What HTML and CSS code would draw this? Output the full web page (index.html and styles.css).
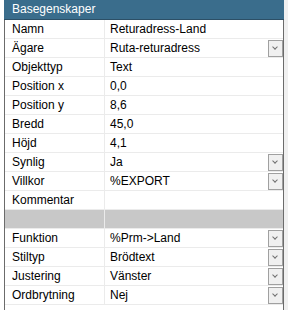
FILE: index.html
```html
<!DOCTYPE html>
<html lang="sv">
<head>
    <meta charset="UTF-8">
    <title>Basegenskaper</title>
    <link rel="stylesheet" href="styles.css">
</head>
<body>
<div class="panel">
    <div class="panel-header">Basegenskaper</div>
    <div class="grid">
        <div class="row"><div class="key">Namn</div><div class="val">Returadress-Land</div></div>
        <div class="row"><div class="key">Ägare</div><div class="val">Ruta-returadress<span class="drop"></span></div></div>
        <div class="row"><div class="key">Objekttyp</div><div class="val">Text</div></div>
        <div class="row"><div class="key">Position x</div><div class="val">0,0</div></div>
        <div class="row"><div class="key">Position y</div><div class="val">8,6</div></div>
        <div class="row"><div class="key">Bredd</div><div class="val">45,0</div></div>
        <div class="row"><div class="key">Höjd</div><div class="val">4,1</div></div>
        <div class="row"><div class="key">Synlig</div><div class="val">Ja<span class="drop"></span></div></div>
        <div class="row"><div class="key">Villkor</div><div class="val">%EXPORT<span class="drop"></span></div></div>
        <div class="row"><div class="key">Kommentar</div><div class="val"></div></div>
        <div class="row sep"><div class="key"></div><div class="val"></div></div>
        <div class="row"><div class="key">Funktion</div><div class="val">%Prm-&gt;Land<span class="drop"></span></div></div>
        <div class="row"><div class="key">Stiltyp</div><div class="val">Brödtext<span class="drop"></span></div></div>
        <div class="row"><div class="key">Justering</div><div class="val">Vänster<span class="drop"></span></div></div>
        <div class="row"><div class="key">Ordbrytning</div><div class="val">Nej<span class="drop"></span></div></div>
    </div>
</div>
</body>
</html>
```

FILE: styles.css
```css
body {
    margin: 0;
    background: #fff;
    font-family: "Liberation Sans", Arial, sans-serif;
    font-size: 12px;
    color: #000;
}
.panel {
    margin-left: 4px;
    width: 278px;
    height: 310px;
    border-left: 1px solid #6b6b6b;
    border-right: 1px solid #6b6b6b;
    box-shadow: 1px 0 0 #f0f0f0, 5px 0 0 #f0f0f0;
}
.panel-header {
    background: #3a6d8c;
    color: #fff;
    height: 19px;
    line-height: 19px;
    padding-left: 8px;
    border-bottom: 1px solid #2c4f66;
    margin-left: -1px;
    margin-right: -1px;
}
.grid {
    display: flex;
    flex-direction: column;
}
.row {
    display: grid;
    grid-template-columns: 100px 1fr;
    height: 19px;
    border-bottom: 1px solid #ebebeb;
    box-sizing: border-box;
}
.key {
    padding-left: 7px;
    line-height: 18px;
    border-right: 1px solid #ebebeb;
}
.val {
    position: relative;
    padding-left: 5px;
    line-height: 18px;
}
.sep {
    background: #c8c8c8;
}
.drop {
    position: absolute;
    right: 0;
    top: 1px;
    width: 13px;
    height: 15px;
    border: 1px solid #a0a0a0;
    background: #f0f0f0;
}
.drop::after {
    content: "";
    position: absolute;
    left: 4px;
    top: 4px;
    width: 3px;
    height: 3px;
    border-right: 1px solid #707070;
    border-bottom: 1px solid #707070;
    transform: rotate(45deg);
}
```
